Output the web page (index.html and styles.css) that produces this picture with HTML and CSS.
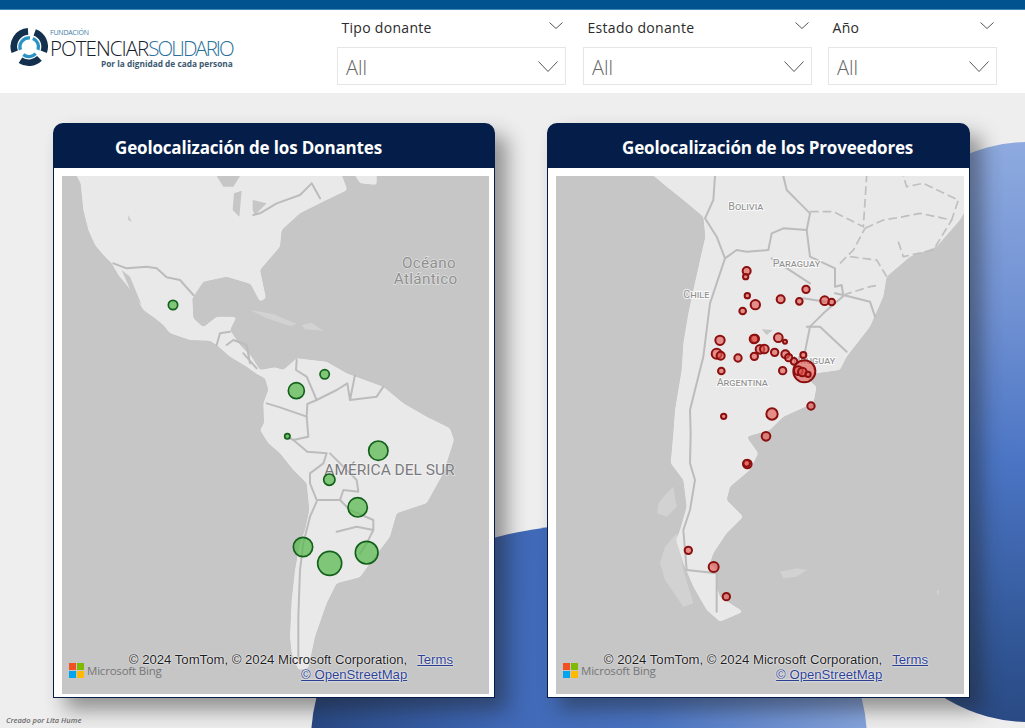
FILE: index.html
```html
<!DOCTYPE html>
<html lang="es">
<head>
<meta charset="utf-8">
<title>Geolocalización</title>
<link rel="stylesheet" href="styles.css">
</head>
<body>
<div class="backdrop">
  <div class="blob blob-bottom"></div>
  <div class="blob blob-right"></div>
</div>
<div class="topbar"></div>
<header class="header">
  <div class="logo">
    <svg class="logo-mark" viewBox="0 0 40 40" aria-hidden="true">
      <g fill="none" stroke="#13304e" stroke-width="7">
        <path d="M5 25A16 16 0 0 1 19 3.500"/>
        <path d="M26 4.500A16 16 0 0 1 35.500 25"/>
        <path d="M31 32A16 16 0 0 1 11 34"/>
      </g>
      <g fill="none" stroke="#2b93c4" stroke-width="3.500">
        <path d="M11 23A9.500 9.500 0 0 1 21 10.500"/>
        <path d="M24 11A9.500 9.500 0 0 1 29.500 23"/>
        <path d="M27 27A9.500 9.500 0 0 1 14 28"/>
      </g>
    </svg>
    <div class="logo-text">
      <span class="logo-small">FUNDACIÓN</span>
      <span class="logo-name"><span class="logo-dark">POTENCIAR</span><span class="logo-blue">SOLIDARIO</span></span>
      <span class="logo-tag">Por la dignidad de cada persona</span>
    </div>
  </div>
  <div class="slicers">
    <div class="slicer slicer-wide">
      <div class="slicer-head"><span>Tipo donante</span>
        <svg class="chev-small" viewBox="0 0 14 7"><path d="M.5.5 7 6.500 13.500.5"/></svg></div>
      <div class="slicer-box"><span class="slicer-value">All</span>
        <svg class="chev-big" viewBox="0 0 20 11"><path d="M.5.5 10 10.500 19.500.5"/></svg></div>
    </div>
    <div class="slicer slicer-wide">
      <div class="slicer-head"><span>Estado donante</span>
        <svg class="chev-small" viewBox="0 0 14 7"><path d="M.5.5 7 6.500 13.500.5"/></svg></div>
      <div class="slicer-box"><span class="slicer-value">All</span>
        <svg class="chev-big" viewBox="0 0 20 11"><path d="M.5.5 10 10.500 19.500.5"/></svg></div>
    </div>
    <div class="slicer slicer-narrow">
      <div class="slicer-head"><span>Año</span>
        <svg class="chev-small" viewBox="0 0 14 7"><path d="M.5.5 7 6.500 13.500.5"/></svg></div>
      <div class="slicer-box"><span class="slicer-value">All</span>
        <svg class="chev-big" viewBox="0 0 20 11"><path d="M.5.5 10 10.500 19.500.5"/></svg></div>
    </div>
  </div>
</header>
<main class="cards">
  <section class="card card-left">
    <h2 class="card-title title-left">Geolocalización de los Donantes</h2>
    <div class="card-body">
      <div class="map">
        <svg class="map-svg" viewBox="6 18 1281 1554" aria-label="Mapa de donantes">
          <defs>
            <filter id="smooth" x="-5%" y="-5%" width="110%" height="110%">
              <feGaussianBlur stdDeviation="5"/>
              <feComponentTransfer><feFuncA type="linear" slope="5" intercept="-2"/></feComponentTransfer>
            </filter>
          </defs>
          <g class="geo-land">
            <path class="land" d="M40 0 62 40 65 70 70 120 85 180 105 225 130 255 155 280 175 315 200 345 230 385 250 420 285 445 310 465 330 490 390 510 450 512 470 525 510 560 560 590 590 612 615 625 625 660 610 700 612 760 600 780 625 820 660 850 700 900 740 940 748 1020 735 1080 720 1120 705 1200 695 1290 690 1400 695 1450 715 1500 745 1495 765 1400 800 1300 830 1240 900 1222 930 1180 990 1100 1010 1030 1100 1000 1150 910 1182 810 1170 775 1100 740 1030 700 970 650 900 625 860 610 800 575 710 565 670 600 645 592 600 600 575 560 540 525 510 480 530 440 470 440 430 472 400 445 397 385 430 335 500 320 572 342 600 395 618 385 600 300 660 230 665 180 720 130 800 90 862 60 840 0Z"/>
            <path class="land" d="M875 0 950 0 950 45 900 40Z"/>
          </g>
          <path class="land-soft" d="M570 420 640 432 710 462 690 468 620 445ZM725 465 755 458 790 482 735 478Z"/>
          <path class="water" d="M470 18 540 18 520 50 490 50ZM522 70 545 62 538 140 518 120ZM578 90 620 100 585 135 578 120ZM205 135 215 155 205 150ZM185 300 210 320 245 405 215 370Z"/>
          <g class="border">
            <path d="M160 280 200 295 260 290 290 295 320 322 360 330 400 375"/>
            <path d="M580 135 600 130 650 100 720 75 755 40 780 85"/>
            <path d="M470 525 480 490 510 485M500 525 520 510 560 525 570 580M550 550 590 595"/>
            <path d="M710 570 708 600 740 620 770 690 742 702 740 740 660 712 620 700"/>
            <path d="M770 690 830 660 862 640 870 690 950 680 970 650M885 615 870 690"/>
            <path d="M740 740 745 800 700 810 680 799M700 810 742 845 800 850 790 880 750 910 750 940 770 990 840 990 850 960 895 965 890 930 810 850"/>
            <path d="M770 995 750 1040 730 1120 720 1200 715 1340 715 1470"/>
            <path d="M840 990 870 1020 940 1050 940 1080 890 1070 830 1085M940 1080 920 1120 900 1150"/>
          </g>
          <text class="map-label label-ocean" x="1107" y="293" text-anchor="middle">Océano</text>
          <text class="map-label label-ocean" x="1097" y="341" text-anchor="middle">Atlántico</text>
          <text class="map-label label-south" x="793" y="916">AMÉRICA DEL SUR</text>
          <g class="bubble-green">
            <circle cx="339" cy="405" r="14"/><circle cx="794" cy="613" r="14"/>
            <circle cx="709" cy="662" r="24"/><circle cx="682" cy="799" r="8"/>
            <circle cx="955" cy="842" r="29"/><circle cx="808" cy="929" r="17"/>
            <circle cx="893" cy="1012" r="29"/><circle cx="729" cy="1131" r="29"/>
            <circle cx="809" cy="1180" r="36"/><circle cx="920" cy="1148" r="34"/>
          </g>
        </svg>
        <div class="bing"><span class="ms-logo"><i class="ms-red"></i><i class="ms-green"></i><i class="ms-blue"></i><i class="ms-yellow"></i></span><span class="bing-name">Microsoft Bing</span></div>
        <div class="attrib">
          <span>© 2024 TomTom, © 2024 Microsoft Corporation,</span><a class="attrib-link">Terms</a>
          <a class="attrib-link">© OpenStreetMap</a><span></span>
        </div>
      </div>
    </div>
  </section>
  <section class="card card-right">
    <h2 class="card-title title-right">Geolocalización de los Proveedores</h2>
    <div class="card-body">
      <div class="map">
        <svg class="map-svg" viewBox="18 18 1224 1554" aria-label="Mapa de proveedores">
          <path class="land-soft" d="M370 950 345 975 325 1000 322 1030 350 1040 380 1010ZM380 1090 345 1130 330 1180 345 1230 400 1310 430 1300 400 1200ZM690 1205 740 1195 770 1200 740 1220 700 1225ZM1160 1260 1168 1262 1164 1280Z"/>
          <g class="geo-land">
            <path class="land" d="M290 0 350 50 400 90 460 140 466 200 450 270 430 360 415 430 400 520 395 600 385 660 375 720 370 790 362 880 400 930 410 1010 390 1080 378 1110 400 1180 430 1250 470 1320 510 1355 580 1325 510 1280 500 1250 500 1200 480 1180 490 1150 530 1090 580 1040 530 990 540 950 600 900 625 850 590 800 660 780 700 740 790 700 800 650 770 625 800 610 870 600 890 560 960 470 1000 380 1010 320 1080 260 1160 230 1230 150 1260 100 1260 0Z"/>
          </g>
          <path class="water" d="M635 478 668 480 650 495Z"/>
          <g class="border">
            <path d="M495 18 490 90 465 145 500 200 525 265 560 240 590 245 655 240 665 190 700 175 770 180 780 260 855 295 855 350 875 345 880 378 820 430 780 470 765 545"/>
            <path d="M525 265 510 310 480 400 470 480 460 560 440 640 420 720 422 790 420 880 435 930 420 1020 400 1080 410 1200 500 1210 500 1325"/>
            <path d="M700 18 710 60 750 100 780 130 770 180"/>
            <path d="M665 265 780 340"/>
            <path d="M770 470 810 470 890 545"/>
            <path d="M855 370 880 375 960 395 975 440"/>
            <path d="M760 385 825 395"/>
          </g>
          <g class="border-dash">
            <path d="M780 125 850 125 940 170 950 18"/>
            <path d="M945 175 1000 150 1060 140 1110 130 1205 150 1225 90 1120 40 1070 50 1060 18"/>
            <path d="M870 280 910 240 945 175"/>
            <path d="M900 260 980 270 1010 320"/>
            <path d="M1045 215 1060 260 1150 240 1205 150"/>
            <path d="M880 375 960 350 990 345"/>
          </g>
          <text class="map-label label-country" x="535" y="121">Bolivia</text>
          <text class="map-label label-country" x="668" y="292">Paraguay</text>
          <text class="map-label label-country" x="400" y="383">Chile</text>
          <text class="map-label label-country" x="730" y="583">Uruguay</text>
          <text class="map-label label-country" x="500" y="648">Argentina</text>
          <g class="bubble-red">
            <circle cx="590" cy="303" r="12"/><circle cx="587" cy="320" r="8"/><circle cx="592" cy="377" r="8"/>
            <circle cx="616" cy="404" r="14"/><circle cx="578" cy="423" r="10"/><circle cx="692" cy="388" r="12"/>
            <circle cx="768" cy="358" r="11"/><circle cx="748" cy="394" r="10"/><circle cx="824" cy="392" r="13"/>
            <circle cx="845" cy="396" r="10"/><circle cx="510" cy="511" r="14"/><circle cx="615" cy="506" r="12"/>
            <circle cx="612" cy="507" r="13"/><circle cx="685" cy="503" r="13"/><circle cx="705" cy="515" r="6"/>
            <circle cx="500" cy="551" r="15"/><circle cx="512" cy="557" r="12"/><circle cx="564" cy="564" r="11"/>
            <circle cx="613" cy="559" r="11"/><circle cx="630" cy="538" r="13"/><circle cx="643" cy="537" r="13"/>
            <circle cx="674" cy="547" r="11"/><circle cx="706" cy="553" r="12"/><circle cx="716" cy="563" r="11"/>
            <circle cx="732" cy="574" r="10"/><circle cx="760" cy="555" r="9"/><circle cx="763" cy="604" r="33"/>
            <circle cx="745" cy="602" r="13"/><circle cx="757" cy="606" r="13"/><circle cx="774" cy="613" r="8"/>
            <circle cx="698" cy="602" r="11"/><circle cx="514" cy="603" r="10"/><circle cx="666" cy="732" r="17"/>
            <circle cx="783" cy="708" r="11"/><circle cx="521" cy="739" r="8"/><circle cx="648" cy="799" r="13"/>
            <circle cx="592" cy="882" r="13"/><circle cx="590" cy="880" r="10"/><circle cx="415" cy="1141" r="11"/>
            <circle cx="491" cy="1191" r="15"/><circle cx="529" cy="1280" r="11"/>
          </g>
        </svg>
        <div class="bing"><span class="ms-logo"><i class="ms-red"></i><i class="ms-green"></i><i class="ms-blue"></i><i class="ms-yellow"></i></span><span class="bing-name">Microsoft Bing</span></div>
        <div class="attrib">
          <span>© 2024 TomTom, © 2024 Microsoft Corporation,</span><a class="attrib-link">Terms</a>
          <a class="attrib-link">© OpenStreetMap</a><span></span>
        </div>
      </div>
    </div>
  </section>
</main>
<footer class="credit">Creado por Lita Hume</footer>
</body>
</html>
```
FILE: styles.css
```css
* { box-sizing: border-box; }
html, body { margin: 0; padding: 0; overflow: hidden; }
body {
  position: relative;
  width: 1025px;
  height: 728px;
  background: #eeeeee;
  font-family: "Open Sans", "Liberation Sans", sans-serif;
}

/* Decorative shapes behind the cards */
.backdrop { position: absolute; inset: 0; overflow: hidden; }
.blob { position: absolute; border-radius: 50%; }
.blob-bottom {
  left: 311px;
  top: 525px;
  width: 556px;
  height: 430px;
  background: linear-gradient(95deg, #26457f 0%, #3f68b6 35%, #4a74c2 60%, #8ba8df 100%);
}
.blob-right {
  left: 819px;
  top: 142px;
  width: 418px;
  height: 580px;
  background: linear-gradient(180deg, #8eaadf 0%, #6f90d2 30%, #4b75c4 55%, #2f5391 90%, #2a4a84 100%);
}

.topbar {
  position: relative;
  height: 10px;
  background: #00538f;
  border-bottom: 1px solid #3f86b0;
}
.header {
  position: relative;
  display: flex;
  height: 83px;
  background: #ffffff;
}

/* Logo */
.logo { display: flex; align-items: flex-start; width: 337px; padding: 17px 0 0 10px; }
.logo-mark { width: 38px; height: 40px; flex: none; }
.logo-text { display: flex; flex-direction: column; margin-left: 2px; padding-top: 2px; }
.logo-small { font-size: 7px; line-height: 7px; color: #3d7da6; letter-spacing: -.2px; }
.logo-name {
  margin-top: 2px;
  font-size: 20.500px;
  line-height: 20px;
  font-weight: 300;
  white-space: nowrap;
}
.logo-dark { color: #15202b; letter-spacing: -.95px; }
.logo-blue { color: #2b6f9c; letter-spacing: -2px; }
.logo-tag {
  margin: 0 0 0 51px;
  font-size: 8.300px;
  line-height: 11px;
  font-weight: 700;
  color: #3d5870;
  white-space: nowrap;
}

/* Slicers */
.slicers { display: flex; }
.slicer-wide { width: 229px; margin-right: 17px; }
.slicer-narrow { width: 169px; margin-left: -1px; }
.slicer-head {
  display: flex;
  justify-content: space-between;
  align-items: flex-start;
  height: 37px;
  padding: 8px 3px 0 4.500px;
  font-size: 14px;
  line-height: 20px;
  letter-spacing: .3px;
  color: #2b2b2b;
}
.chev-small { width: 14px; height: 7px; margin-top: 4px; fill: none; stroke: #555555; stroke-width: 1; }
.slicer-box {
  display: flex;
  justify-content: space-between;
  align-items: center;
  height: 38px;
  padding: 0 7px 0 8px;
  border: 1px solid #e6e6e6;
  font-size: 20px;
  font-weight: 300;
  color: #666666;
  background: #ffffff;
}
.slicer-value { padding-top: 2px; }
.chev-big { width: 20px; height: 11px; fill: none; stroke: #555555; stroke-width: 1; }

/* Cards */
.cards { position: relative; display: flex; align-items: flex-start; gap: 52px; padding: 30px 0 0 53px; }
.card { height: 575px; display: flex; flex-direction: column; box-shadow: 12px 12px 20px rgba(30, 30, 30, .45); border-radius: 10px 10px 0 0; }
.card-left { width: 442px; }
.card-right { width: 423px; }
.card-title {
  flex: none;
  height: 44px;
  margin: 0;
  border-radius: 10px 10px 0 0;
  background: #041e49;
  color: #ffffff;
  font-size: 17px;
  font-weight: 700;
  letter-spacing: -.16px;
  line-height: 50px;
  white-space: nowrap;
}
.title-left { padding-left: 62px; }
.title-right { padding-left: 75px; }
.card-body {
  flex: 1;
  display: flex;
  padding: 8px 5px 3px 8px;
  background: #ffffff;
  border: 1px solid #041e49;
}
.map { position: relative; flex: 1; background: #c6c6c6; overflow: hidden; }
.map-svg { display: block; width: 100%; height: 100%; }
.geo-land { filter: url(#smooth); }
.land { fill: #e9e9e9; }
.land-soft { fill: #d2d2d2; filter: blur(2px); }
.water { fill: #c6c6c6; filter: blur(1.500px); }
.border { fill: none; stroke: #bcbcbc; stroke-width: 6; stroke-linejoin: round; stroke-linecap: round; filter: blur(1.500px); }
.border-dash { fill: none; stroke: #bfbfbf; stroke-width: 5; stroke-dasharray: 26 12; filter: blur(1.500px); }
.map-label { font-family: Roboto, "Liberation Sans", sans-serif; paint-order: stroke; stroke: rgba(255, 255, 255, .5); stroke-width: 4; }
.label-ocean { font-size: 46px; fill: #8f8f8f; letter-spacing: 1px; }
.label-south { font-size: 46.500px; fill: #7a7a7e; }
.label-country { font-size: 32px; fill: #909090; font-variant: small-caps; stroke: rgba(255, 255, 255, .8); stroke-width: 6; }
.bubble-green circle { fill: rgba(88, 184, 76, .72); stroke: #12601a; stroke-width: 5; }
.bubble-red circle { fill: rgba(226, 84, 76, .62); stroke: #8c0f0f; stroke-width: 6; }

/* Map overlays */
.bing { position: absolute; left: 7px; bottom: 16px; display: flex; align-items: center; gap: 3px; }
.ms-logo { display: grid; grid-template-columns: 7px 7px; grid-template-rows: 7px 7px; gap: 1px; }
.ms-red { background: #f25022; }
.ms-green { background: #7fba00; }
.ms-blue { background: #00a4ef; }
.ms-yellow { background: #ffb900; }
.bing-name { font-size: 11.500px; line-height: 15px; color: #767676; letter-spacing: -.2px; }
.attrib {
  position: absolute;
  right: 36px;
  bottom: 12px;
  display: grid;
  grid-template-columns: auto auto;
  column-gap: 10px;
  justify-items: end;
  font-family: "Liberation Sans", sans-serif;
  font-size: 13.150px;
  line-height: 15px;
  color: #1d1d1d;
  text-shadow: 0 0 2px #ffffff, 0 0 1px #ffffff;
  white-space: nowrap;
}
.attrib-link { color: #2b3f94; text-decoration: underline; }

.credit {
  position: absolute;
  left: 6px;
  top: 715px;
  font-size: 7.500px;
  line-height: 10px;
  font-style: italic;
  font-weight: 600;
  color: #6a6a6a;
}
```
